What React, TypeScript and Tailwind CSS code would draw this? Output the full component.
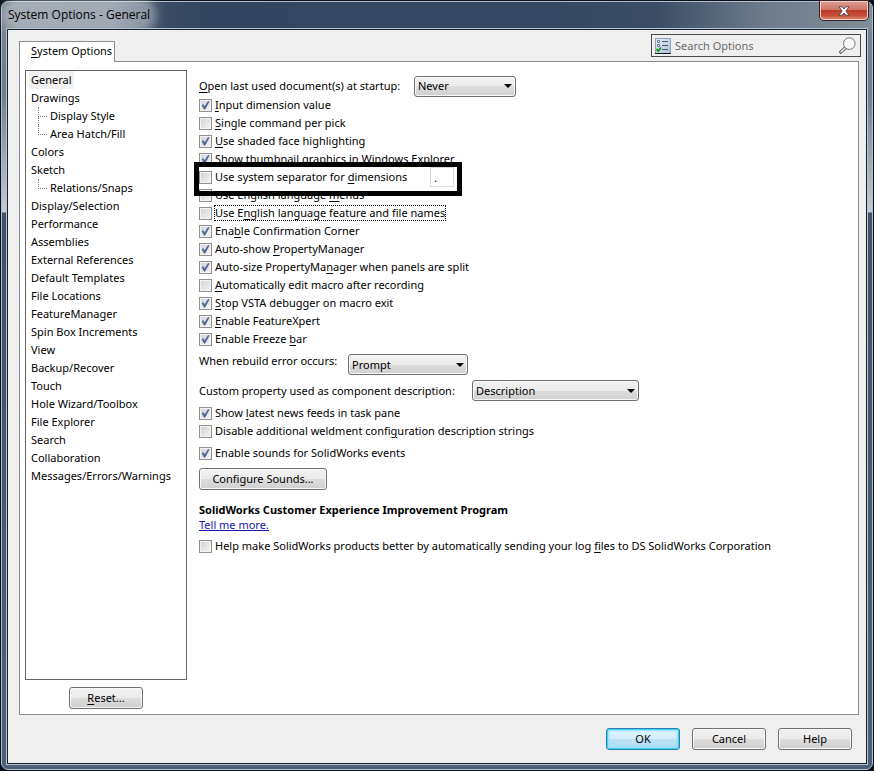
import { useState } from 'react'
import type { ReactNode } from 'react'
import clsx from 'clsx'

type Page = { name: string; child?: boolean; last?: boolean }

const pages: Page[] = [
  { name: 'General' },
  { name: 'Drawings' },
  { name: 'Display Style', child: true },
  { name: 'Area Hatch/Fill', child: true, last: true },
  { name: 'Colors' },
  { name: 'Sketch' },
  { name: 'Relations/Snaps', child: true, last: true },
  { name: 'Display/Selection' },
  { name: 'Performance' },
  { name: 'Assemblies' },
  { name: 'External References' },
  { name: 'Default Templates' },
  { name: 'File Locations' },
  { name: 'FeatureManager' },
  { name: 'Spin Box Increments' },
  { name: 'View' },
  { name: 'Backup/Recover' },
  { name: 'Touch' },
  { name: 'Hole Wizard/Toolbox' },
  { name: 'File Explorer' },
  { name: 'Search' },
  { name: 'Collaboration' },
  { name: 'Messages/Errors/Warnings' },
]

// "&" marks the access key, like in the resource strings
function Mnemonic({ text }: { text: string }) {
  const i = text.indexOf('&')
  if (i < 0) return <>{text}</>
  return (
    <>
      {text.slice(0, i)}
      <span className="underline underline-offset-2">{text[i + 1]}</span>
      {text.slice(i + 2)}
    </>
  )
}

function Check({ text, on = false, focused = false, children }: {
  text: string
  on?: boolean
  focused?: boolean
  children?: ReactNode
}) {
  return (
    <div className="relative flex h-[18px] w-fit items-center">
      <label className="flex items-center gap-[2px] whitespace-nowrap">
        <span className="grid size-[13px] shrink-0">
          <input
            type="checkbox"
            defaultChecked={on}
            className="peer col-start-1 row-start-1 size-[13px] appearance-none border border-[#8e8f8f] bg-linear-to-br from-[#cfd1d4] to-[#f6f6f6] shadow-[inset_0_0_0_1px_#f4f4f4] outline-none"
          />
          <svg viewBox="0 0 13 13" className="pointer-events-none invisible col-start-1 row-start-1 size-[13px] peer-checked:visible">
            <path d="M3 6.2 4.3 5.6 5.6 7.8 9 2.5 10.2 2.5 6 10.3 5.2 10.3Z" fill="#4a5f97" stroke="#4a5f97" strokeWidth=".5" />
          </svg>
        </span>
        <span className={clsx('border leading-[14px]', focused ? 'border-dotted border-black' : 'border-transparent')}>
          <Mnemonic text={text} />
        </span>
      </label>
      {children}
    </div>
  )
}

function Select({ id, value, options, className }: {
  id: string
  value: string
  options: string[]
  className: string
}) {
  return (
    <div className={clsx('grid shrink-0', className)}>
      <select
        id={id}
        defaultValue={value}
        className="col-start-1 row-start-1 h-[21px] w-full appearance-none rounded-[3px] border border-[#707070] bg-[linear-gradient(#f2f2f2_0%,#ebebeb_50%,#dddddd_50%,#cfcfcf_100%)] pl-[3px] leading-[14px] shadow-[inset_0_0_0_1px_#f8f8f8] outline-none"
      >
        {options.map((o) => <option key={o}>{o}</option>)}
      </select>
      <svg viewBox="0 0 8 4" className="pointer-events-none col-start-1 row-start-1 mr-1 h-1 w-2 self-center justify-self-end">
        <path d="M0 0H8L4 4Z" fill="#000" />
      </svg>
    </div>
  )
}

function Button({ text, primary, className }: { text: string; primary?: boolean; className: string }) {
  return (
    <button
      className={clsx(
        'h-[22px] shrink-0 rounded-[3px] border leading-[14px]',
        primary
          ? 'border-[#2c7fae] bg-[linear-gradient(#e4f4fc_0%,#d2edfb_50%,#bbe2f7_50%,#b4def4_100%)] shadow-[inset_0_0_0_1px_#3fd0f5,inset_0_0_2px_2px_#8fe3fa]'
          : 'border-[#707070] bg-[linear-gradient(#f2f2f2_0%,#ebebeb_50%,#dddddd_50%,#cfcfcf_100%)] shadow-[inset_0_0_0_1px_#f8f8f8]',
        className,
      )}
    >
      <Mnemonic text={text} />
    </button>
  )
}

function PageList() {
  const [current, setCurrent] = useState('General')
  return (
    <ul className="flex-1 border border-[#646468] bg-white">
      {pages.map((p) => (
        <li key={p.name} className="flex h-[18px] items-center pl-[3px]">
          {p.child && (
            <span className="flex h-full w-[19px] flex-col pl-[9px]">
              <span className="h-[10px] w-[9px] border-b border-l border-dotted border-[#808080]" />
              {!p.last && <span className="h-2 w-[9px] border-l border-dotted border-[#808080]" />}
            </span>
          )}
          <button
            onClick={() => setCurrent(p.name)}
            className={clsx('h-full px-[2px] leading-[16px] whitespace-nowrap', current === p.name && 'bg-[#f0f0f0]')}
          >
            {p.name}
          </button>
        </li>
      ))}
    </ul>
  )
}

function SearchBox() {
  return (
    <label className="mt-1 flex h-[23px] w-[210px] items-center self-start border border-[#4c4a48] bg-[#efefef] pr-1 pl-[3px]">
      <svg viewBox="0 0 16 16" className="size-4 shrink-0">
        <defs>
          <linearGradient id="listIcon" x1="0" y1="0" x2="1" y2="1">
            <stop offset="0" stopColor="#e8f0f8" />
            <stop offset="1" stopColor="#a9bdd2" />
          </linearGradient>
        </defs>
        <rect x=".5" y=".5" width="15" height="15" fill="url(#listIcon)" stroke="#8fa3b8" />
        <path d="M0 15.5H16" stroke="#10161e" />
        <path d="M2.5 2.5h2v2h-2zM2.5 6.5h2v2h-2z" fill="#fff" stroke="#53708f" strokeWidth=".8" />
        <path d="M7 3.5H13M7 7.5H13M7 11.5H13" stroke="#3f5f83" />
        <path d="M1.5 11 3.3 13 6 9.5" fill="none" stroke="#169a28" strokeWidth="1.9" />
      </svg>
      <input
        aria-label="Search Options"
        placeholder="Search Options"
        className="ml-1 min-w-0 flex-1 bg-transparent outline-none placeholder:text-[#6b6b6b]"
      />
      <svg viewBox="0 0 17 17" className="size-[17px] shrink-0" fill="none">
        <path d="M6.2 10.8 1.8 15.2" stroke="#555" strokeWidth="3.2" strokeLinecap="round" />
        <path d="M6 11 2 15" stroke="#f2f2f2" strokeWidth="1.5" strokeLinecap="round" />
        <circle cx="10.3" cy="6.6" r="5.8" fill="#f8f8f8" stroke="#777" />
        <path d="M6.8 6A3.6 3.6 0 0 1 9.9 3" stroke="#fff" strokeWidth="1.2" />
      </svg>
    </label>
  )
}

function TitleBar() {
  return (
    <header className="flex h-[26px] items-start justify-between rounded-t-[6px] bg-[linear-gradient(90deg,#76828f_0px,#6d7b8c_110px,#3a4b63_165px,#34465f_200px,#374962_65%,#3b4c63_75%,#6f7d8c_88%,#808c99_100%)] pl-[6px]">
      <h1 className="rounded-full bg-white/35 font-['Open_Sans',sans-serif] text-[12px] leading-[25px] shadow-[0_0_8px_6px_rgba(255,255,255,0.35)]">
        System Options - General
      </h1>
      <button
        aria-label="Close"
        className="-mt-px mr-[4px] grid h-[19px] w-[48px] place-items-center rounded-b-[4px] border border-[#f0d0c8] bg-[linear-gradient(#d89a8c_0%,#cf7565_45%,#b83a28_50%,#c6503a_80%,#dc8068_100%)] shadow-[0_0_0_1px_#3a2024]"
      >
        <svg viewBox="0 0 12 10" className="h-[10px] w-[12px]">
          <path d="M1 .8H4L6 3 8 .8H11L7.8 5 11 9.2H8L6 7 4 9.2H1L4.2 5Z" fill="#fff" stroke="#4a4450" strokeWidth=".9" />
        </svg>
      </button>
    </header>
  )
}

function GeneralPage() {
  return (
    <form className="flex min-w-0 flex-1 flex-col pt-[6px]" onSubmit={(e) => e.preventDefault()}>
      <div className="flex h-5 items-center">
        <label htmlFor="startup" className="w-[215px] shrink-0"><Mnemonic text="&Open last used document(s) at startup:" /></label>
        <Select id="startup" value="Never" options={['Never', 'Always']} className="w-[102px]" />
      </div>

      <Check text="&Input dimension value" on />
      <Check text="&Single command per pick" />
      <Check text="&Use shaded face highlighting" on />
      <Check text="Show thumbnail graphics in Windows E&xplorer" on />
      <div className="relative z-10 flex w-[258px] items-center justify-between">
        <Check text="Use system separator for &dimensions" />
        <input
          aria-label="Decimal separator"
          defaultValue="."
          className="-my-px mr-[3px] h-5 w-6 border border-[#d5d9e2] bg-white px-[3px] outline-none"
        />
        <div className="pointer-events-none absolute -inset-x-[5px] -top-[6px] -bottom-[10px] border-[5px] border-black" />
      </div>
      <Check text="Use English language &menus" />
      <Check text="Use E&nglish language feature and file names" focused />
      <Check text="Ena&ble Confirmation Corner" on />
      <Check text="Auto-show &PropertyManager" on />
      <Check text="Auto-size PropertyMa&nager when panels are split" on />
      <Check text="&Automatically edit macro after recording" />
      <Check text="&Stop VSTA debugger on macro exit" on />
      <Check text="&Enable FeatureXpert" on />
      <Check text="Enable Freeze &bar" on />

      <div className="mt-[6px] flex h-[21px] items-start">
        <label htmlFor="rebuild" className="w-[149px] shrink-0">When rebuild error occurs:</label>
        <Select id="rebuild" value="Prompt" options={['Prompt', 'Stop', 'Continue']} className="w-[120px]" />
      </div>
      <div className="mt-[5px] mb-[3px] flex h-[21px] items-center">
        <label htmlFor="property" className="w-[273px] shrink-0">Custom property used as component description:</label>
        <Select id="property" value="Description" options={['Description']} className="w-[167px]" />
      </div>

      <Check text="Show &latest news feeds in task pane" on />
      <Check text="Disable additional weldment confi&guration description strings" />
      <div className="mt-1">
        <Check text="Enable sounds for SolidWorks events" on />
      </div>
      <Button text="Configure Sounds..." className="mt-[6px] w-[128px]" />

      <h2 className="mt-3 leading-[16px] font-bold">SolidWorks Customer Experience Improvement Program</h2>
      <a href="#" className="w-fit text-[#1414b8] underline">Tell me more.</a>
      <div className="mt-[5px]">
        <Check text="Help make SolidWorks products better by automatically sending your log &files to DS SolidWorks Corporation" />
      </div>
    </form>
  )
}

export default function App() {
  return (
    <div className="flex min-h-screen bg-[#0a111d] p-px font-['Noto_Sans',sans-serif] text-[11px] leading-[14px] text-black">
      <div className="flex min-w-0 flex-1 flex-col rounded-[7px] border border-[#b4bfca] bg-[linear-gradient(#7b8794_0px,#6f7d8c_90px,#c3cbd4_210px,#40516a_211px,#4c6179_100%)]">
        <TitleBar />
        <div className="mx-1 mb-1 flex flex-1 flex-col border border-[#b9c4cf]">
          <main className="flex flex-1 flex-col border border-[#172230] bg-[#efefef]">
            <div className="flex h-[31px] items-end justify-between pr-[5px] pl-[11px]">
              <div role="tab" className="relative -mb-px h-[21px] border border-b-0 border-[#8b8b90] bg-white pr-[2px] pl-[11px] leading-[18px]">
                <Mnemonic text="&System Options" />
              </div>
              <SearchBox />
            </div>

            <section className="mr-[7px] ml-[11px] flex flex-1 gap-3 border border-[#8b8b90] bg-white pt-2 pr-2 pb-[5px] pl-[5px]">
              <div className="flex w-[162px] shrink-0 flex-col gap-[7px]">
                <PageList />
                <Button text="&Reset..." className="w-[74px] self-center" />
              </div>
              <GeneralPage />
            </section>

            <footer className="flex justify-end gap-3 pt-[13px] pr-[14px] pb-[13px]">
              <Button text="OK" primary className="w-[74px]" />
              <Button text="Cancel" className="w-[74px]" />
              <Button text="Help" className="w-[74px]" />
            </footer>
          </main>
        </div>
      </div>
    </div>
  )
}
